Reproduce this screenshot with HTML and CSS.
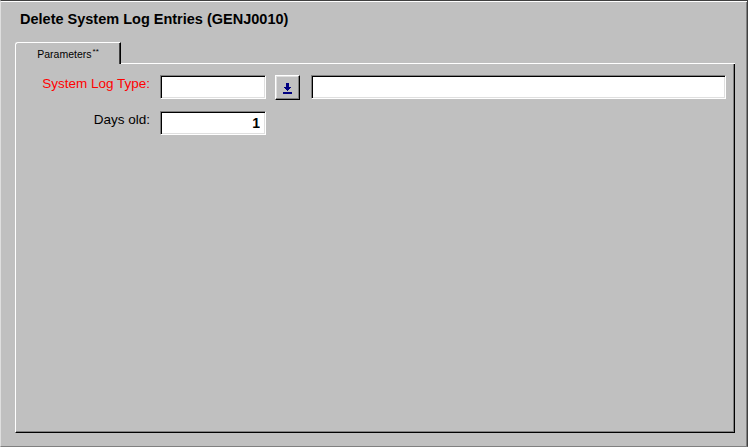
FILE: index.html
```html
<!DOCTYPE html>
<html lang="en">

<head>
    <meta charset="UTF-8">
    <title>Delete System Log Entries</title>
    <link rel="stylesheet" href="styles.css">
</head>

<body>
    <div class="window">
        <h1 class="title">Delete System Log Entries (GENJ0010)</h1>

        <div class="tabs">
            <div class="tab active">Parameters<sup>**</sup></div>
            <div class="tab-fill"></div>
        </div>

        <div class="panel">
            <div class="form">
                <label class="lbl required" for="logType">System Log Type:</label>
                <div class="field-row">
                    <input class="txt short" id="logType" type="text">
                    <button class="lookup" type="button">
                        <svg width="9" height="11" viewBox="0 0 9 11" shape-rendering="crispEdges">
                            <rect x="3" y="0" width="3" height="4" fill="#000080"/>
                            <rect x="1" y="4" width="7" height="1" fill="#000080"/>
                            <rect x="2" y="5" width="5" height="1" fill="#000080"/>
                            <rect x="3" y="6" width="3" height="1" fill="#000080"/>
                            <rect x="4" y="7" width="1" height="1" fill="#000080"/>
                            <rect x="0" y="9" width="9" height="2" fill="#000080"/>
                        </svg>
                    </button>
                    <input class="txt long" type="text">
                </div>

                <label class="lbl" for="daysOld">Days old:</label>
                <div class="field-row">
                    <input class="txt short num" id="daysOld" type="text" value="1">
                </div>
            </div>
        </div>
    </div>
</body>

</html>
```

FILE: styles.css
```css
body {
    margin: 0;
    padding: 0;
    background: #c0c0c0;
    font-family: 'Liberation Sans', Arial, sans-serif;
}

.window {
    width: 748px;
    height: 447px;
    box-sizing: border-box;
    display: flex;
    flex-direction: column;
    padding: 0 12px 13px 14px;
    background: #c0c0c0;
    border-top: 1px solid #404040;
    border-left: 1px solid #dfdfdf;
    border-right: 1px solid #404040;
    border-bottom: 1px solid #808080;
    box-shadow: inset 0 1px 0 #ffffff, inset -1px 0 0 #808080;
}

.title {
    margin: 0;
    height: 41px;
    box-sizing: border-box;
    padding: 10px 0 0 5px;
    font-size: 14.5px;
    font-weight: bold;
    color: #000;
}

.tabs {
    display: flex;
    height: 22px;
}

.tab {
    width: 106px;
    box-sizing: border-box;
    padding-top: 5px;
    text-align: center;
    font-size: 10.5px;
    color: #000;
    border-top: 1px solid #ffffff;
    border-left: 1px solid #ffffff;
    border-right: 1px solid #000000;
    border-top-left-radius: 3px;
    box-shadow: inset -1px 0 0 #404040;
}

.tab sup {
    font-size: 8px;
    vertical-align: top;
    position: relative;
    top: -1px;
    margin-left: 1px;
}

.tab-fill {
    flex: 1;
    border-bottom: 1px solid #ffffff;
}

.panel {
    flex: 1;
    border-left: 1px solid #ffffff;
    border-right: 1px solid #000000;
    border-bottom: 1px solid #000000;
    box-shadow: inset -1px -1px 0 #808080;
}

.form {
    display: grid;
    grid-template-columns: 134px auto;
    column-gap: 10px;
    row-gap: 11px;
    padding-top: 11px;
    align-items: start;
}

.lbl {
    text-align: right;
    font-size: 13.5px;
    padding-top: 1px;
    color: #000;
}

.lbl.required {
    color: #ff0000;
}

.field-row {
    display: flex;
    align-items: flex-start;
}

.txt {
    height: 24px;
    box-sizing: border-box;
    margin: 0;
    padding: 0 5px;
    background: #ffffff;
    font-family: 'Liberation Sans', Arial, sans-serif;
    font-size: 14px;
    border: 1px solid;
    border-color: #808080 #ffffff #ffffff #808080;
    box-shadow: inset 1px 1px 0 #000000, inset -1px -1px 0 #dfdfdf;
    outline: none;
}

.txt.short {
    width: 106px;
}

.txt.long {
    width: 415px;
    margin-left: 11px;
}

.txt.num {
    text-align: right;
    font-weight: bold;
}

.lookup {
    width: 25px;
    height: 25px;
    box-sizing: border-box;
    margin: 0 0 0 9px;
    padding: 0;
    display: flex;
    justify-content: center;
    align-items: center;
    background: #c0c0c0;
    border: 1px solid;
    border-color: #ffffff #000000 #000000 #ffffff;
    box-shadow: inset -1px -1px 0 #808080, inset 1px 1px 0 #dfdfdf;
}

.lookup svg {
    display: block;
    margin-top: 2px;
}
```
